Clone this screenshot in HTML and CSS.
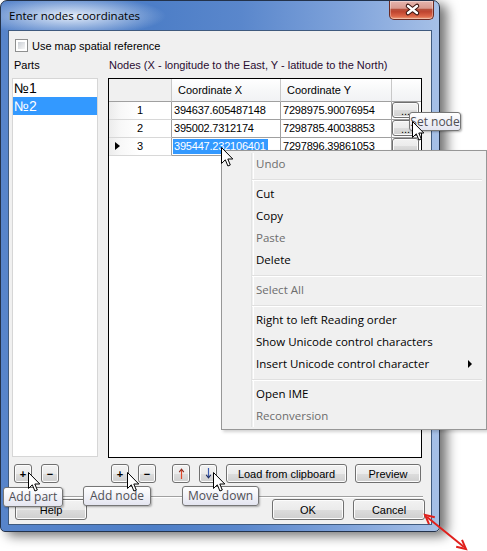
FILE: index.html
```html
<!DOCTYPE html>
<html>
<head>
<meta charset="utf-8">
<link rel="stylesheet" href="styles.css">
</head>
<body>
<div class="window">
  <div class="titlebar">
    <span class="title">Enter nodes coordinates</span>
    <div class="close">
      <svg width="45" height="18" viewBox="0 0 45 18"><path d="M18 5 L27 12 M27 5 L18 12" stroke="#3a1410" stroke-width="4.5" stroke-linecap="round"/><path d="M18 5 L27 12 M27 5 L18 12" stroke="#ffffff" stroke-width="2.4" stroke-linecap="round"/></svg>
    </div>
  </div>
  <div class="client">
    <div class="chk-row"><span class="chk"><span class="chk-in"></span></span><span>Use map spatial reference</span></div>
    <div class="main">
      <div class="parts">
        <div class="lbl">Parts</div>
        <div class="listbox">
          <div class="item">№1</div>
          <div class="item sel">№2</div>
        </div>
      </div>
      <div class="nodes">
        <div class="lbl lbl-nodes">Nodes (X - longitude to the East, Y - latitude to the North)</div>
        <div class="grid">
          <div class="grow ghead">
            <div class="c rh"></div><div class="c cx">Coordinate X</div><div class="c cy">Coordinate Y</div><div class="c cb"></div>
          </div>
          <div class="grow">
            <div class="c rh">1</div><div class="c cx">394637.605487148</div><div class="c cy">7298975.90076954</div><div class="c cb"><span class="dbtn">...</span></div>
          </div>
          <div class="grow">
            <div class="c rh">2</div><div class="c cx">395002.7312174</div><div class="c cy">7298785.40038853</div><div class="c cb"><span class="dbtn">...</span></div>
          </div>
          <div class="grow">
            <div class="c rh"><span class="ind"></span>3</div><div class="c cx edit"><span class="hl">395447.232106401</span></div><div class="c cy">7297896.39861053</div><div class="c cb"><span class="dbtn"></span></div>
          </div>
        </div>
      </div>
    </div>
    <div class="btn-row">
      <span class="btn sq">+</span>
      <span class="btn sq g9">−</span>
      <span class="btn sq g52">+</span>
      <span class="btn sq g9">−</span>
      <span class="btn sq g16"><svg width="7" height="11" viewBox="0 0 7 11"><path d="M3.5 2 V11" stroke="#e0482a" stroke-width="1.2"/><path d="M1.2 4.2 L3.5 1.2 L5.8 4.2" stroke="#8a2a20" stroke-width="1.1" fill="none"/></svg></span>
      <span class="btn sq g9"><svg width="7" height="11" viewBox="0 0 7 11"><path d="M3.5 0 V9" stroke="#3a5ab0" stroke-width="1.2"/><path d="M1.2 6.8 L3.5 9.8 L5.8 6.8" stroke="#1c2c60" stroke-width="1.1" fill="none"/></svg></span>
      <span class="btn load g9">Load from clipboard</span>
      <span class="btn preview g8">Preview</span>
    </div>
    <div class="sep"></div>
    <div class="bottom-row">
      <span class="btn wide">Help</span>
      <span class="btn wide push">OK</span>
      <span class="btn wide g9">Cancel</span>
    </div>
  </div>
</div>

<div class="menu">
  <div class="mi dis">Undo</div>
  <div class="msep"></div>
  <div class="mi">Cut</div>
  <div class="mi">Copy</div>
  <div class="mi dis">Paste</div>
  <div class="mi">Delete</div>
  <div class="msep"></div>
  <div class="mi dis">Select All</div>
  <div class="msep"></div>
  <div class="mi">Right to left Reading order</div>
  <div class="mi">Show Unicode control characters</div>
  <div class="mi sub">Insert Unicode control character</div>
  <div class="msep"></div>
  <div class="mi">Open IME</div>
  <div class="mi dis">Reconversion</div>
</div>

<div class="tip tip-part">Add part</div>
<div class="tip tip-node">Add node</div>
<div class="tip tip-down">Move down</div>
<div class="tip tip-set">Set node</div>

<svg class="cursor cur1" width="13" height="21" viewBox="0 0 13 21"><path d="M0.5 0.5 V16.5 L4.3 12.8 L6.9 19 L9.3 18 L6.8 12 H11.8 Z" fill="#fff" stroke="#000" stroke-width="1" stroke-linejoin="miter"/></svg>
<svg class="cursor cur2" width="13" height="21" viewBox="0 0 13 21"><path d="M0.5 0.5 V16.5 L4.3 12.8 L6.9 19 L9.3 18 L6.8 12 H11.8 Z" fill="#fff" stroke="#000" stroke-width="1" stroke-linejoin="miter"/></svg>
<svg class="cursor cur3" width="13" height="21" viewBox="0 0 13 21"><path d="M0.5 0.5 V16.5 L4.3 12.8 L6.9 19 L9.3 18 L6.8 12 H11.8 Z" fill="#fff" stroke="#000" stroke-width="1" stroke-linejoin="miter"/></svg>
<svg class="cursor cur4" width="13" height="21" viewBox="0 0 13 21"><path d="M0.5 0.5 V16.5 L4.3 12.8 L6.9 19 L9.3 18 L6.8 12 H11.8 Z" fill="#fff" stroke="#000" stroke-width="1" stroke-linejoin="miter"/></svg>
<svg class="cursor cur5" width="13" height="21" viewBox="0 0 13 21"><path d="M0.5 0.5 V16.5 L4.3 12.8 L6.9 19 L9.3 18 L6.8 12 H11.8 Z" fill="#fff" stroke="#000" stroke-width="1" stroke-linejoin="miter"/></svg>

<svg class="resize-arrow" width="56" height="43" viewBox="0 0 56 43">
  <path d="M9 9 L46 39" stroke="#e0201c" stroke-width="2"/>
  <polyline points="11,16.2 7,7 16.8,9.3" fill="none" stroke="#e0201c" stroke-width="2"/>
  <polyline points="38.2,38.7 48,41 44,31.8" fill="none" stroke="#e0201c" stroke-width="2"/>
</svg>
</body>
</html>
```

FILE: styles.css
```css
html, body {
  margin: 0;
  padding: 0;
}
body {
  width: 487px;
  height: 551px;
  overflow: hidden;
  position: relative;
  background: #ffffff;
  font-family: "Liberation Sans", Arial, sans-serif;
  font-size: 11px;
  color: #000;
}

.window {
  box-sizing: border-box;
  width: 440px;
  height: 532px;
  border: 1px solid #23324a;
  border-radius: 7px 7px 5px 5px;
  padding: 0 7px 6px 7px;
  background:
    radial-gradient(ellipse 95px 20px at 70px 15px, rgba(235,242,252,0.95), rgba(235,242,252,0) 100%),
    linear-gradient(to right, #5784ca 0%, #4d7ec7 35%, #5a87cc 55%, #7ea2da 78%, #a6c0e7 100%);
  box-shadow: 7px 4px 12px rgba(0,0,0,0.55);
}

.titlebar {
  height: 29px;
  display: flex;
  align-items: flex-start;
}
.title {
  font-family: "Open Sans", "Noto Sans", sans-serif;
  font-size: 11.5px;
  line-height: 29px;
  padding-left: 1px;
  color: #000;
}
.close {
  margin-left: auto;
  margin-right: -2px;
  width: 45px;
  height: 19px;
  box-sizing: border-box;
  border: 1px solid #6a2a22;
  border-top: none;
  border-radius: 0 0 5px 5px;
  background: linear-gradient(#e6b5ae 0%, #d99a8f 40%, #b8503c 47%, #bf4530 60%, #dc6648 85%, #eca07e 100%);
  box-shadow: inset 0 0 0 1px rgba(255,255,255,0.35);
}
.close svg { display: block; }

.client {
  box-sizing: border-box;
  width: 424px;
  height: 495px;
  border: 1px solid #3f5a7e;
  background: #f0f0f0;
  display: flex;
  flex-direction: column;
  padding-top: 8px;
}

.chk-row {
  display: flex;
  align-items: center;
  height: 13px;
  padding-left: 6px;
}
.chk {
  box-sizing: border-box;
  width: 13px;
  height: 13px;
  border: 1px solid #8e8f8f;
  background: #fff;
  margin-right: 4px;
  display: flex;
  padding: 2px;
}
.chk-in {
  flex: 1;
  background: linear-gradient(135deg, #cbcfd5, #f6f6f6);
}

.main {
  margin-top: 6px;
  display: flex;
  align-items: flex-start;
}
.lbl {
  height: 14px;
  line-height: 14px;
  margin-bottom: 6px;
  padding-left: 2px;
  white-space: nowrap;
}
.parts {
  margin-left: 3px;
  width: 86px;
}
.listbox {
  box-sizing: border-box;
  height: 379px;
  border: 1px solid #d6d6d6;
  background: #fff;
}
.item {
  height: 18px;
  line-height: 18px;
  font-size: 14px;
  padding-left: 1px;
}
.item.sel {
  background: #3399ff;
  color: #fff;
}

.nodes {
  margin-left: 10px;
  width: 314px;
}
.lbl-nodes {
  padding-left: 1px;
  color: #2a0c30;
}
.grid {
  box-sizing: border-box;
  height: 380px;
  border: 1px solid #000;
  background: #fff;
}
.grow {
  display: flex;
  height: 18px;
}
.c {
  box-sizing: border-box;
  height: 100%;
  border-right: 1px solid #a0a0a0;
  border-bottom: 1px solid #a0a0a0;
  line-height: 17px;
  white-space: nowrap;
  overflow: hidden;
}
.rh {
  width: 63px;
  position: relative;
  text-align: center;
  padding-left: 0;
  background: linear-gradient(to right, #ececec 0px, #f8f8f8 12px, #ffffff 30px);
  border-bottom-color: #d8d8d8;
  border-right-color: #a0a0a0;
}
.cx {
  width: 109px;
  padding-left: 2px;
  letter-spacing: -0.2px;
}
.cy {
  width: 111px;
  padding-left: 2px;
  letter-spacing: -0.2px;
}
.cb {
  width: 29px;
  border-right: none;
}
.ghead {
  height: 23px;
}
.ghead .c {
  line-height: 22px;
  letter-spacing: 0;
  padding-left: 6px;
  background: linear-gradient(#ffffff 0%, #f7f8f9 50%, #f1f2f4 100%);
  border-right-color: #c8c8c8;
  border-bottom-color: #a0a0a0;
}
.ghead .rh {
  background: #f0f0f0;
  border-right-color: #c8c8c8;
}
.ghead .cb {
  border-right: none;
}
.ind {
  position: absolute;
  left: 6px;
  top: 4px;
  width: 0;
  height: 0;
  border-left: 5px solid #000;
  border-top: 4.5px solid transparent;
  border-bottom: 4.5px solid transparent;
}
.edit {
  padding-left: 1px;
  padding-top: 1px;
}
.hl {
  display: inline-block;
  background: #3399ff;
  color: #fff;
  line-height: 15px;
  height: 15px;
  padding: 0 2px 0 1px;
  vertical-align: top;
}
.dbtn {
  box-sizing: border-box;
  display: flex;
  justify-content: center;
  align-items: flex-end;
  width: 27px;
  height: 16px;
  border: 1px solid #707070;
  border-radius: 3px;
  background: linear-gradient(#f2f2f2 0%, #ebebeb 50%, #dddddd 51%, #cfcfcf 100%);
  box-shadow: inset 0 0 0 1px #fbfbfb;
  line-height: 10px;
  letter-spacing: 0;
  padding-bottom: 1px;
}

.btn {
  box-sizing: border-box;
  display: flex;
  align-items: center;
  justify-content: center;
  height: 100%;
  border: 1px solid #707070;
  border-radius: 3px;
  background: linear-gradient(#f2f2f2 0%, #ebebeb 50%, #dddddd 51%, #cfcfcf 100%);
  box-shadow: inset 0 0 0 1px #fcfcfc;
  color: #000;
  white-space: nowrap;
}
.btn-row {
  margin-top: 6px;
  height: 19px;
  display: flex;
  padding-left: 5px;
}
.sq {
  width: 18px;
  font-size: 11px;
  font-weight: bold;
}
.sq svg { display: block; }
.g8 { margin-left: 8px; }
.g9 { margin-left: 9px; }
.g16 { margin-left: 16px; }
.g52 { margin-left: 52px; }
.load { width: 121px; }
.preview { width: 66px; }

.sep {
  margin-top: 13px;
  margin-left: 3px;
  width: 411px;
  height: 2px;
  box-sizing: border-box;
  border-top: 1px solid #a0a0a0;
  border-bottom: 1px solid #ffffff;
}
.bottom-row {
  margin-top: 1px;
  height: 21px;
  display: flex;
  padding-left: 6px;
  padding-right: 6px;
}
.wide { width: 72px; }
.push { margin-left: auto; }

.menu {
  position: absolute;
  left: 221px;
  top: 150px;
  width: 266px;
  box-sizing: border-box;
  border: 1px solid #979797;
  background: #f0f0f0;
  padding: 2px;
  font-family: "Open Sans", "Noto Sans", sans-serif;
  font-size: 11.5px;
  box-shadow: 2px 2px 3px rgba(0,0,0,0.18);
}
.menu::before {
  content: "";
  position: absolute;
  left: 29px;
  top: 2px;
  bottom: 2px;
  width: 1px;
  border-left: 1px solid #e2e3e3;
  border-right: 1px solid #ffffff;
}
.mi {
  position: relative;
  height: 22px;
  line-height: 22px;
  padding-left: 32px;
  color: #000;
  white-space: nowrap;
}
.mi.dis { color: #6d6d6d; }
.mi.sub::after {
  content: "";
  position: absolute;
  right: 12px;
  top: 7px;
  width: 0;
  height: 0;
  border-left: 4px solid #000;
  border-top: 4px solid transparent;
  border-bottom: 4px solid transparent;
}
.msep {
  position: relative;
  height: 8px;
}
.msep::after {
  content: "";
  position: absolute;
  left: 28px;
  right: 2px;
  top: 4px;
  height: 0;
  border-top: 1px solid #e0e0e0;
  border-bottom: 1px solid #ffffff;
}

.tip {
  position: absolute;
  box-sizing: border-box;
  height: 20px;
  line-height: 18px;
  border: 1px solid #767676;
  border-radius: 3px;
  background: linear-gradient(#ffffff, #e4e5f0);
  color: #4f4f55;
  font-family: "Open Sans", "Noto Sans", sans-serif;
  font-size: 12px;
  text-align: center;
  white-space: nowrap;
  box-shadow: 1px 1px 2px rgba(0,0,0,0.3);
}
.tip-part { left: 3px; top: 487px; width: 60px; }
.tip-node { left: 83px; top: 486px; width: 68px; }
.tip-down { left: 182px; top: 486px; width: 77px; }
.tip-set { left: 409px; top: 112px; width: 52px; height: 19px; line-height: 17px; }

.cursor {
  position: absolute;
  display: block;
}
.cur1 { left: 221px; top: 147px; }
.cur2 { left: 412px; top: 121px; }
.cur3 { left: 28px; top: 472px; }
.cur4 { left: 127px; top: 472px; }
.cur5 { left: 213px; top: 472px; }

.resize-arrow {
  position: absolute;
  left: 418px;
  top: 508px;
  display: block;
}
```
